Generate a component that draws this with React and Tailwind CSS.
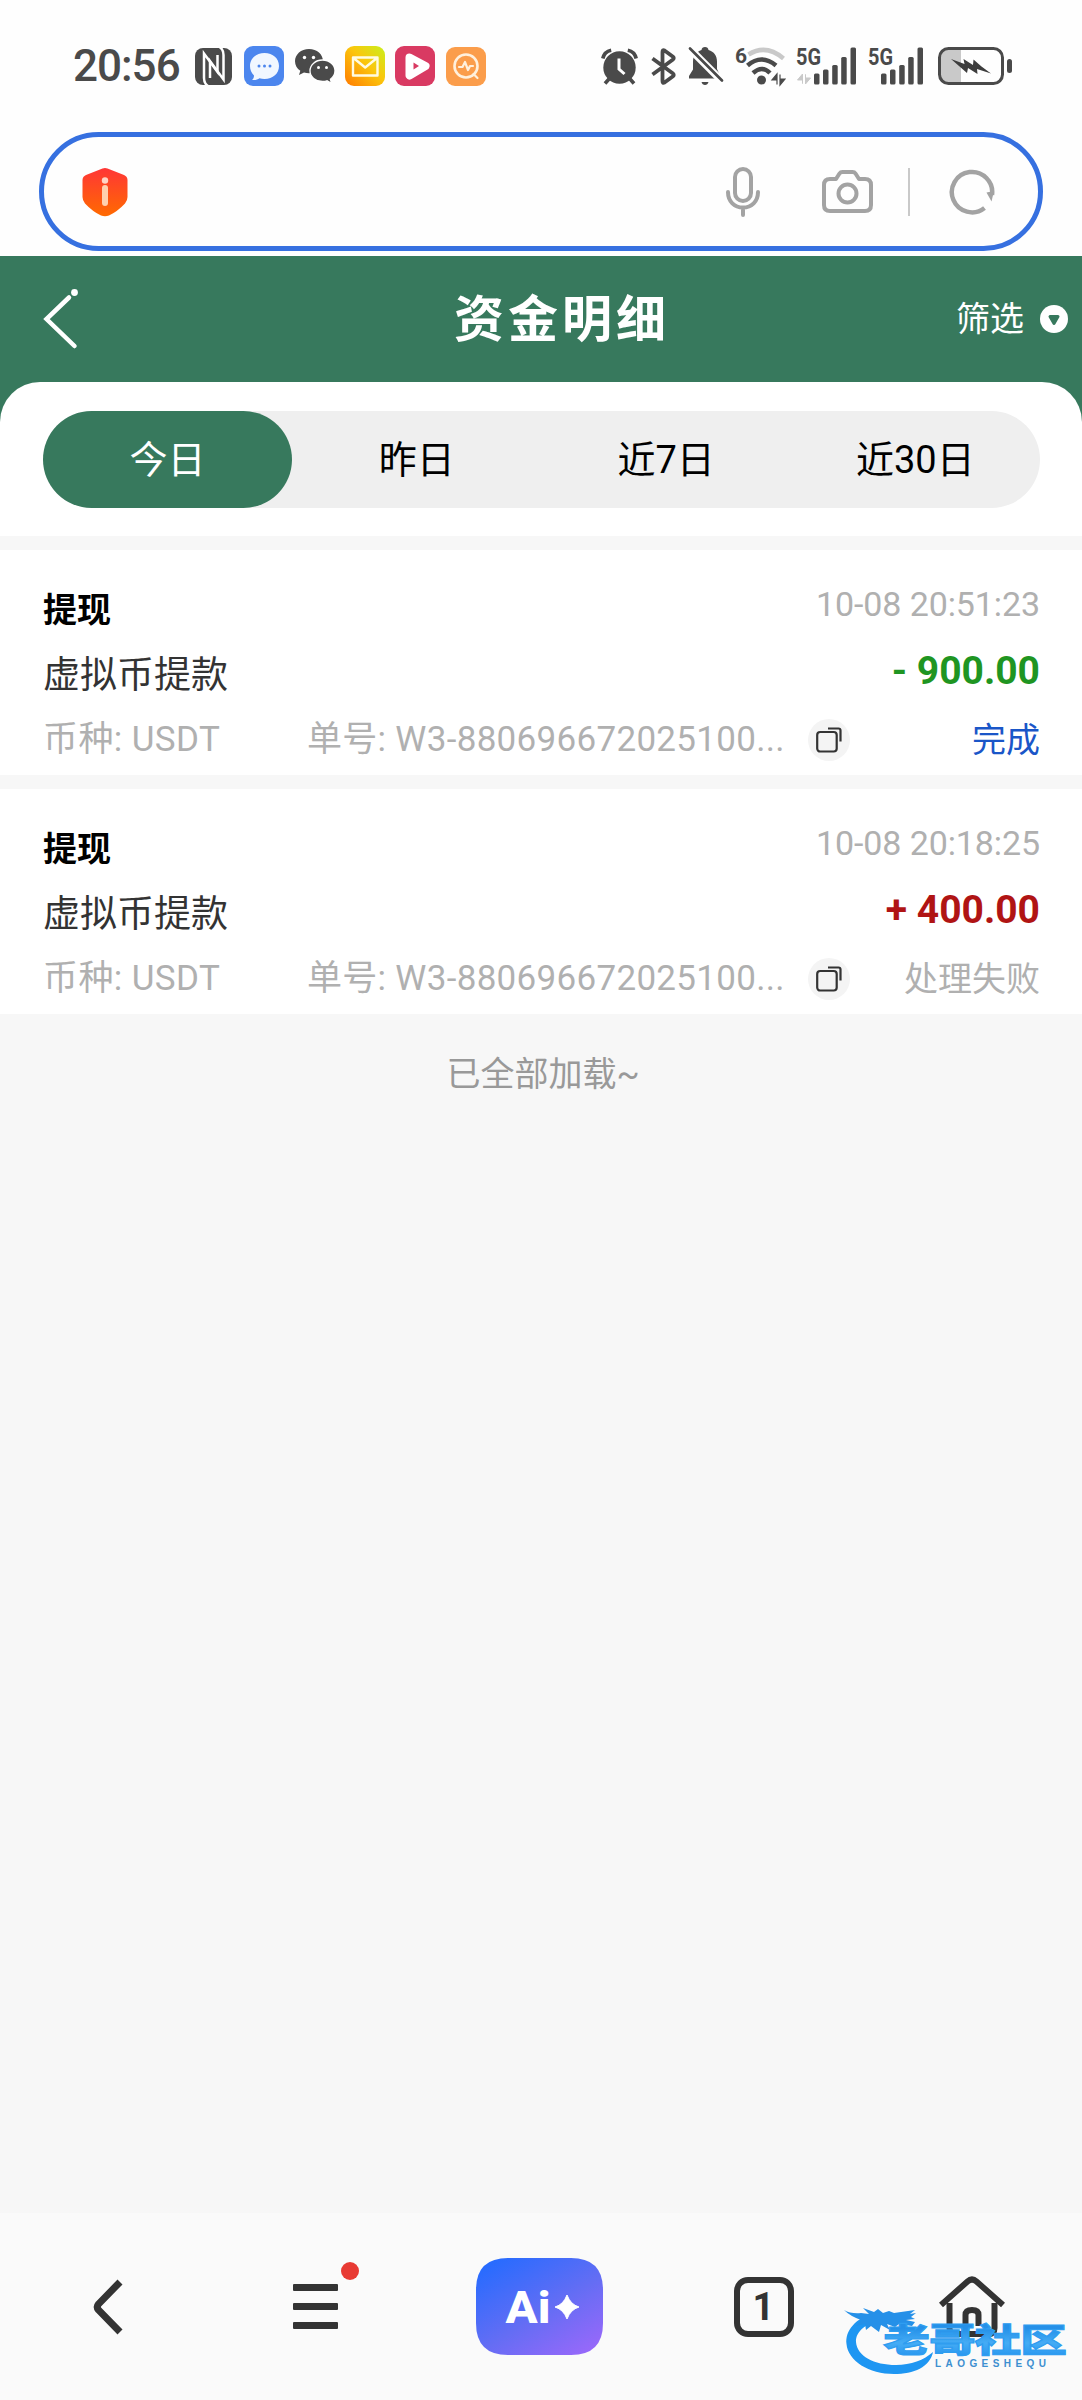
import React, { useState } from "react";

const tabs = ["今日", "昨日", "近7日", "近30日"];

const records = [
  {
    id: 1,
    type: "提现",
    name: "虚拟币提款",
    time: "10-08 20:51:23",
    amount: "- 900.00",
    amountClass: "text-[#1f9522]",
    currency: "USDT",
    orderNo: "W3-880696672025100...",
    status: "完成",
    statusClass: "text-[#1a56c8]",
  },
  {
    id: 2,
    type: "提现",
    name: "虚拟币提款",
    time: "10-08 20:18:25",
    amount: "+ 400.00",
    amountClass: "text-[#b01414]",
    currency: "USDT",
    orderNo: "W3-880696672025100...",
    status: "处理失败",
    statusClass: "text-[#b0b0b0]",
  },
];

function SignalBars() {
  return (
    <g fill="#4a4a4a">
      <rect x="0" y="26" width="5.5" height="11" rx="1.5" />
      <rect x="9" y="22" width="5.5" height="15" rx="1.5" />
      <rect x="18.2" y="17.5" width="5.5" height="19.5" rx="1.5" />
      <rect x="27.2" y="9.5" width="5.5" height="27.5" rx="1.5" />
      <rect x="36.5" y="0" width="5.5" height="37" rx="1.5" />
    </g>
  );
}

function StatusBar() {
  return (
    <div className="h-[132px] flex items-center justify-between pl-[73px] pr-[69px] text-[#4a4a4a]">
      <div className="flex items-center">
        <span className="w-[122px] text-[44px] leading-none font-medium tracking-[-1px]">
          20:56
        </span>
        {/* NFC */}
        <svg className="w-[37px] h-[37px]" viewBox="0 0 37 37">
          <rect width="37" height="37" rx="8" fill="#4a4a4a" />
          <g fill="none" stroke="#fff" strokeWidth="2.5">
            <path d="M13 38Q9 35.500 9 30V5.500L22.500 24V7" />
            <path d="M24.500-1Q28.500 1.500 28.500 7V31.500L15 13V30" />
          </g>
        </svg>
        {/* Messages */}
        <svg className="w-10 h-10 ml-3" viewBox="0 0 40 40">
          <rect width="40" height="40" rx="9" fill="#4c86ee" />
          <path
            d="M20.500 7C12 7 6 12.500 6 20c0 4 1.500 7 4 9.500 0 2-.8 3.500-2 4.500 3 .3 5.500-.5 7.500-1.800 1.500.5 3.200.8 5 .8 8.500 0 14.500-5.500 14.500-13S29 7 20.500 7z"
            fill="#f1f7ff"
          />
          <g fill="#4c86ee">
            <circle cx="15" cy="20" r="1.500" />
            <circle cx="20.500" cy="20" r="1.500" />
            <circle cx="26" cy="20" r="1.500" />
          </g>
        </svg>
        {/* WeChat */}
        <svg className="w-10 h-9 ml-[11px]" viewBox="0 0 40 36">
          <path
            d="M14 1C6 1 0 6.500 0 13.300c0 4 2 7.300 5.300 9.500L4 27l5-2.600c1.600.5 3.300.8 5 .8 8 0 14-5.200 14-12S22 1 14 1z"
            fill="#4a4a4a"
          />
          <path
            d="M27.500 12C20.500 12 15 16.800 15 22.800S20.500 33.500 27.500 33.500c1.600 0 3.100-.2 4.500-.7l4.500 2.400-1.100-4c2.900-2 4.600-5 4.600-8.400C40 16.800 34.500 12 27.500 12z"
            fill="#4a4a4a"
            stroke="#fff"
            strokeWidth="1.300"
          />
          <g fill="#fff">
            <circle cx="9.500" cy="9.500" r="1.700" />
            <circle cx="18.500" cy="9.500" r="1.700" />
            <circle cx="23.500" cy="19.500" r="1.500" />
            <circle cx="31.500" cy="19.500" r="1.500" />
          </g>
        </svg>
        {/* Mail */}
        <svg className="w-10 h-10 ml-[10px]" viewBox="0 0 40 40">
          <defs>
            <linearGradient id="mail" x1="0" y1="1" x2="1" y2="0">
              <stop offset="0" stopColor="#ff7a00" />
              <stop offset="0.55" stopColor="#fbc60c" />
              <stop offset="1" stopColor="#c9f01c" />
            </linearGradient>
          </defs>
          <rect width="40" height="40" rx="9" fill="url(#mail)" />
          <path
            d="M8 11.500h24.500v18H8zM8.500 12l11.700 9.500L32 12"
            fill="none"
            stroke="#fffbe0"
            strokeWidth="2.400"
            strokeLinejoin="round"
          />
        </svg>
        {/* Video */}
        <svg className="w-10 h-10 ml-[10px]" viewBox="0 0 40 40">
          <rect width="40" height="40" rx="9" fill="#d93a62" />
          <path
            d="M14.500 11.500l16 8.500-16 9.500z"
            fill="#fff"
            stroke="#fff"
            strokeWidth="8"
            strokeLinejoin="round"
          />
          <path d="M18.500 16.500l5.500 3.500-5.500 3.500z" fill="#d93a62" />
        </svg>
        {/* Monitor */}
        <svg className="w-10 h-10 ml-[11px]" viewBox="0 0 40 40">
          <rect y="1" width="40" height="39" rx="9" fill="#fb9d4b" />
          <circle
            cx="20"
            cy="20"
            r="11.500"
            fill="none"
            stroke="#fff0dc"
            strokeWidth="2.600"
          />
          <path
            d="M13 21h3.500l2.500-5 3 8 2-4h3M27.500 28l4 4"
            fill="none"
            stroke="#fff0dc"
            strokeWidth="2.200"
            strokeLinecap="round"
            strokeLinejoin="round"
          />
        </svg>
      </div>

      <div className="flex items-center">
        {/* Alarm */}
        <svg className="w-[37px] h-[37px]" viewBox="0 0 37 37">
          <circle cx="18.500" cy="19.500" r="16.200" fill="#4a4a4a" />
          <path
            d="M1.800 10.500C2.800 6 6 3 10.200 2.200M35.200 10.500c-1-4.500-4.200-7.500-8.400-8.300M8 31l-4 4.500M29 31l4 4.500"
            stroke="#4a4a4a"
            strokeWidth="3.600"
            fill="none"
          />
          <path
            d="M18 10.500v10.500l5.500 5"
            stroke="#fff"
            strokeWidth="3"
            fill="none"
          />
        </svg>
        {/* Bluetooth */}
        <svg className="w-[25px] h-[37px] ml-[13px]" viewBox="0 0 25 37">
          <path
            d="M1.500 10.500L22 25.500q1.500 1.500 0 2.700L13.500 34.500Q11.500 35.500 11.500 33V4q0-2.500 2-1.500L22 8.800q1.500 1.200 0 2.700L1.500 26.500"
            fill="none"
            stroke="#4a4a4a"
            strokeWidth="3.800"
            strokeLinejoin="round"
          />
        </svg>
        {/* Muted bell */}
        <svg className="w-[36px] h-[40px] ml-[12px]" viewBox="0 0 36 40">
          <path
            d="M17 1c2 0 3.300 1.200 3.500 3C26 5.500 29 10 29 15.500V23l3 6.500v3H1v-2.500l4-6.500v-8C5 10 8.500 5.500 13.500 4 13.700 2.200 15 1 17 1z"
            fill="#4a4a4a"
          />
          <path d="M13.500 36h7c-.5 2-1.800 3-3.500 3s-3-1-3.500-3z" fill="#4a4a4a" />
          <path d="M-1 0l37 37" stroke="#fff" strokeWidth="7.500" />
          <path
            d="M2 2.500l32 32"
            stroke="#4a4a4a"
            strokeWidth="2.700"
            strokeLinecap="round"
          />
        </svg>
        {/* Wi-Fi 6 */}
        <svg className="w-[51px] h-[56px] ml-[11px]" viewBox="0 -8 51 56">
          <text x="0" y="17" fontSize="21" fontWeight="700" fill="#4a4a4a">
            6
          </text>
          <path
            d="M13.500 8.500q17.500-11 35 4"
            fill="none"
            stroke="#c9c9c9"
            strokeWidth="4.500"
          />
          <path
            d="M12.500 19.500q14-12 28.500 0M18 27q9-8 17 0"
            fill="none"
            stroke="#4a4a4a"
            strokeWidth="4.500"
          />
          <circle cx="26.500" cy="34" r="4.500" fill="#4a4a4a" />
          <path
            d="M42 38.500V28l-5 6h5zM45 28.500V39l5-6h-5z"
            fill="#4a4a4a"
            stroke="#4a4a4a"
            strokeWidth="1.200"
          />
        </svg>
        {/* SIM 1 */}
        <svg className="w-[61px] h-[54px] ml-[10px]" viewBox="0 -8 61 54">
          <text
            x="0"
            y="18"
            fontSize="24"
            fontWeight="700"
            fill="#4a4a4a"
            textLength="25"
            lengthAdjust="spacingAndGlyphs"
          >
            5G
          </text>
          <path
            d="M6.500 36.500V27l-5 6h5zM9.500 27.500V37l5-6h-5z"
            fill="#c9c9c9"
            stroke="#c9c9c9"
            strokeWidth="1"
          />
          <g transform="translate(18 .5)">
            <SignalBars />
          </g>
        </svg>
        {/* SIM 2 */}
        <svg className="w-[56px] h-[54px] ml-[11px]" viewBox="0 -8 56 54">
          <text
            x="0"
            y="18"
            fontSize="24"
            fontWeight="700"
            fill="#4a4a4a"
            textLength="25"
            lengthAdjust="spacingAndGlyphs"
          >
            5G
          </text>
          <g transform="translate(13 .5)">
            <SignalBars />
          </g>
        </svg>
        {/* Battery */}
        <svg className="w-[75px] h-[38px] ml-[14px]" viewBox="0 0 75 38">
          <path d="M10 2h13v34H10a8 8 0 0 1-8-8V10a8 8 0 0 1 8-8z" fill="#c9c9c9" />
          <rect
            x="1.500"
            y="1.500"
            width="63"
            height="35"
            rx="9"
            fill="none"
            stroke="#4a4a4a"
            strokeWidth="3"
          />
          <rect x="69" y="12" width="5" height="14" rx="2.500" fill="#4a4a4a" />
          <path
            d="M13 12l13.500 5-1-5 9.500 6 .5-5.500 8 7L53 26.500l-14-4.500.5 5-9.500-6-1 5z"
            fill="#3d3d3d"
          />
        </svg>
      </div>
    </div>
  );
}

function AddressBar() {
  return (
    <div className="h-[124px] px-[39px]">
      <div className="h-[119px] rounded-full border-[5px] border-[#3670e0] flex items-center justify-between pl-[38px] pr-[43px]">
        <svg className="w-[46px] h-[50px]" viewBox="0 0 46 50">
          <defs>
            <linearGradient id="shield" x1="0" y1="0" x2="0" y2="1">
              <stop offset="0" stopColor="#ff3636" />
              <stop offset="1" stopColor="#ff6a00" />
            </linearGradient>
          </defs>
          <path
            d="M20.500 1.500q2.500-1 5 0L42 8q3.500 1.500 3.500 5v17q0 3.500-2.500 6.500Q35.500 44.500 27 48.500q-4 1.500-8 0Q10.500 44.500 3 36.500.5 33.500.5 30V13Q.5 9.500 4 8z"
            fill="url(#shield)"
          />
          <circle cx="23" cy="13.500" r="3.200" fill="#ffd3c4" />
          <path
            d="M23 21v15"
            stroke="#ffd0ae"
            strokeWidth="6"
            strokeLinecap="round"
          />
        </svg>

        <div className="flex items-center text-[#a3a3a3]">
          <svg className="w-[34px] h-[50px]" viewBox="0 0 34 50">
            <g
              fill="none"
              stroke="currentColor"
              strokeWidth="4"
              strokeLinecap="round"
            >
              <rect x="9" y="2" width="16" height="32" rx="8" />
              <path d="M2 25c0 9.500 6.500 15.500 15 15.500S32 34.500 32 25M17 40.500V48" />
            </g>
          </svg>
          <svg className="w-[51px] h-[44px] ml-[62px]" viewBox="0 0 51 44">
            <g
              fill="none"
              stroke="currentColor"
              strokeWidth="4"
              strokeLinejoin="round"
            >
              <path d="M8 9h6l3.500-5.500Q18.500 2 20.500 2h10q2 0 3 1.500L37 9h6q6 0 6 6v20q0 6-6 6H8q-6 0-6-6V15q0-6 6-6z" />
              <circle cx="25.500" cy="23.500" r="9" />
            </g>
          </svg>
          <div className="w-[2px] h-12 bg-[#c9c9c9] ml-[35px]" />
          <svg className="w-[46px] h-[46px] ml-[39px]" viewBox="0 0 46 46">
            <path
              d="M35.500 39A20.200 20.200 0 1 1 43 26"
              fill="none"
              stroke="currentColor"
              strokeWidth="4.500"
            />
            <path d="M37.500 23.500l7.500-1.500-2.500 10.500z" fill="currentColor" />
          </svg>
        </div>
      </div>
    </div>
  );
}

function Header() {
  return (
    <header className="h-[126px] grid grid-cols-[1fr_auto_1fr] items-center text-white">
      <svg className="w-[40px] h-[64px] ml-[40px]" viewBox="0 0 40 64">
        <path
          d="M29 10.500L6.500 32 34.500 59"
          fill="none"
          stroke="#fff"
          strokeWidth="4.500"
          strokeLinecap="round"
        />
        <circle cx="34.500" cy="5.500" r="3.400" fill="#fff" />
      </svg>
      <h1 className="text-[50px] leading-none font-bold tracking-[4px] ml-[42px] pt-px">
        资金明细
      </h1>
      <button className="flex items-center justify-end text-[34px] leading-none pr-[14px]">
        筛选
        <svg className="w-7 h-7 ml-4" viewBox="0 0 28 28">
          <circle cx="14" cy="14" r="14" fill="#fff" />
          <path
            d="M10 11.500h8L14 18.500z"
            fill="#37795d"
            stroke="#37795d"
            strokeWidth="3"
            strokeLinejoin="round"
          />
        </svg>
      </button>
    </header>
  );
}

function RecordCard({ record }) {
  return (
    <div className="h-[225px] bg-white pl-[43px] pr-[42px] pt-[28px]">
      <div className="h-16 flex items-center justify-between">
        <h3 className="text-[34px] leading-none font-bold text-black">
          {record.type}
        </h3>
        <span className="text-[34px] leading-none tracking-[-0.1px] text-[#b0b0b0] pb-[12px]">
          {record.time}
        </span>
      </div>
      <div className="h-[66px] flex items-center justify-between">
        <span className="text-[37px] leading-none text-[#333]">
          {record.name}
        </span>
        <span
          className={`text-[39px] leading-none font-bold pb-2 ${record.amountClass}`}
        >
          {record.amount}
        </span>
      </div>
      <div className="h-[63px] flex items-center text-[35px] leading-none text-[#b0b0b0]">
        <span className="w-[264px] tracking-[0.4px]">
          币种: {record.currency}
        </span>
        <span className="w-[479px] whitespace-nowrap tracking-[0.3px]">
          单号: {record.orderNo}
        </span>
        <button className="w-[42px] h-[42px] ml-[22px] rounded-full bg-[#f4f4f4] flex items-center justify-center">
          <svg className="w-[26px] h-[26px]" viewBox="0 0 26 26">
            <g fill="none" stroke="#333" strokeWidth="2.200">
              <rect x="1.200" y="5" width="19.500" height="19.500" rx="3" />
              <path d="M12 1.500h10.500q2 0 2 2V14.500" />
            </g>
          </svg>
        </button>
        <span className={`ml-auto text-[34px] ${record.statusClass}`}>
          {record.status}
        </span>
      </div>
    </div>
  );
}

function BottomNav() {
  return (
    <nav className="h-[187px] bg-[#fafafa] grid grid-cols-[212px_207px_240px_209px_214px] justify-items-center items-center">
      <svg className="w-[34px] h-[56px] ml-1" viewBox="0 0 34 56">
        <path
          d="M29 3L7.500 25q-2.500 3 0 6L29 53"
          fill="none"
          stroke="#333"
          strokeWidth="7"
        />
      </svg>
      <div className="relative w-[45px] h-[45px] flex flex-col justify-between">
        <span className="h-[7px] rounded-[1px] bg-[#333]" />
        <span className="h-[7px] rounded-[1px] bg-[#333]" />
        <span className="h-[7px] rounded-[1px] bg-[#333]" />
        <span className="absolute -top-[22px] -right-[21px] w-[18px] h-[18px] rounded-full bg-[#e83a33]" />
      </div>
      <svg className="w-[127px] h-[97px]" viewBox="0 0 127 97">
        <defs>
          <linearGradient id="ai" x1="0.100" y1="0" x2="0.900" y2="1">
            <stop offset="0" stopColor="#236bff" />
            <stop offset="0.550" stopColor="#646df4" />
            <stop offset="1" stopColor="#9a68fa" />
          </linearGradient>
        </defs>
        <path
          d="M32 0h63q32 0 32 32v33q0 32-32 32H32Q0 97 0 65V32Q0 0 32 0z"
          fill="url(#ai)"
        />
        <text
          x="29.500"
          y="64.500"
          fontSize="45"
          fontWeight="800"
          fill="#fff"
          fontFamily="Roboto"
          textLength="45"
          lengthAdjust="spacingAndGlyphs"
        >
          Ai
        </text>
        <path
          d="M91 37q3.500 9.500 12 12-8.500 2.500-12 12-3.500-9.500-12-12 8.500-2.500 12-12z"
          fill="#fff"
          stroke="#fff"
          strokeLinejoin="round"
        />
      </svg>
      <div className="w-[60px] h-[60px] rounded-[14px] border-[6px] border-[#333] flex items-center justify-center text-[38px] leading-none font-bold text-[#333]">
        1
      </div>
      <svg className="w-[68px] h-[62px] -ml-[6px]" viewBox="0 0 68 62">
        <g fill="none" stroke="#333" strokeWidth="6">
          <path d="M3 29L29.500 5.500q4.500-4 9 0L65 29" />
          <path d="M11.500 27v25q0 6 6 6h33q6 0 6-6V27" />
          <path d="M27.500 50V39q0-5 6.500-5t6.500 5v11" />
        </g>
      </svg>
    </nav>
  );
}

function Watermark() {
  return (
    <div className="absolute right-[14px] bottom-[24px] w-[225px] h-[72px]">
      <svg className="w-full h-full overflow-visible" viewBox="0 0 225 72">
        <defs>
          <linearGradient id="wm" x1="0" y1="0" x2="0" y2="1">
            <stop offset="0.300" stopColor="#2590e8" />
            <stop offset="0.600" stopColor="#45acf5" />
            <stop offset="1" stopColor="#1b8cec" />
          </linearGradient>
        </defs>
        <path
          d="M33 8C12 14 2 27 3.500 40 5 57 26 70 51 70c20 0 36-7 39-22-9 8-22 13-37 13-22 0-39-9-40-23C12.500 27 24 18 43 15z"
          fill="#1e96f2"
        />
        <path
          d="M1 6q7 4 17 3l8 1-6-6 11 4 4-3 5 4 6-2 5 2 21-3-5 4 6-1-5 4 4 2-9 1 9 2-3 4-13-2-4 3-8-3 3 6-9-5-2 7-8-6-5 4-1-6-9 2 5-6Q7 12 1 6z"
          fill="#2590e8"
        />
        <text
          x="28.500"
          y="48.500"
          fontSize="33"
          fontWeight="900"
          fontFamily="'Noto Sans CJK SC', sans-serif"
          textLength="131"
          transform="translate(0.500 0) scale(1.400 1)"
          fill="url(#wm)"
          stroke="#2f9df0"
          strokeWidth="1.200"
        >
          老哥社区
        </text>
        <text
          x="92"
          y="62.500"
          fontSize="10"
          fontWeight="700"
          fill="#3d8fd0"
          fontFamily="'Liberation Sans', sans-serif"
          textLength="111"
        >
          LAOGESHEQU
        </text>
      </svg>
    </div>
  );
}

export default function App() {
  const [activeTab, setActiveTab] = useState(0);

  return (
    <div className="relative w-[1082px] h-[2400px] flex flex-col bg-[#f7f7f7] font-[Roboto,'Noto_Sans_CJK_SC',sans-serif] overflow-hidden">
      <div className="bg-[#fefefe]">
        <StatusBar />
        <AddressBar />
      </div>

      <div className="bg-[#37795d]">
        <Header />
        {/* Date range tabs */}
        <div className="h-[154px] bg-white rounded-t-[40px] pl-[43px] pr-[42px] pt-[29px]">
          <div className="h-[97px] grid grid-cols-4 rounded-full bg-[#efefef]">
            {tabs.map((tab, i) => (
              <button
                key={tab}
                onClick={() => setActiveTab(i)}
                className={`rounded-full text-[38px] leading-none ${
                  activeTab === i ? "bg-[#37795d] text-white" : "text-black"
                }`}
              >
                {tab}
              </button>
            ))}
          </div>
        </div>
      </div>

      <main className="flex-1 flex flex-col gap-[14px] pt-[14px]">
        {records.map((record) => (
          <RecordCard key={record.id} record={record} />
        ))}
        <p className="mt-[29px] pl-1 text-center text-[34px] leading-none text-[#999]">
          已全部加载~
        </p>
      </main>

      <BottomNav />
      <Watermark />
    </div>
  );
}
